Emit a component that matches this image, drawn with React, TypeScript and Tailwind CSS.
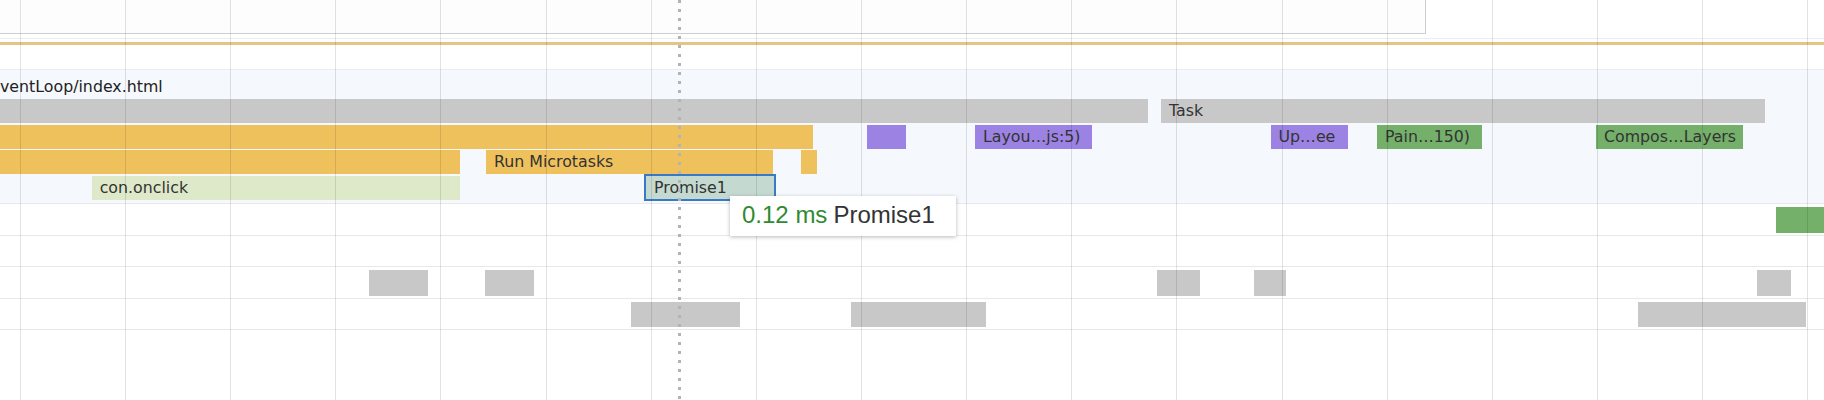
import React from "react";

type Bar = { x: number; w: number; cls: string; label?: string; selected?: boolean };

const GRAY = "bg-[#c8c8c8]";
const ORANGE = "bg-[#efc15d]";
const PURPLE = "bg-[#9c83e3]";
const GREEN = "bg-[#74b06a]";

// vertical time grid
const gridLines = Array.from({ length: 18 }, (_, i) => Math.round(19.8 + i * 105.15));

const flameRows: Bar[][] = [
  [
    { x: 0, w: 1148, cls: GRAY },
    { x: 1161, w: 604, cls: GRAY, label: "Task" },
  ],
  [
    { x: 0, w: 812.5, cls: ORANGE },
    { x: 867, w: 39, cls: PURPLE },
    { x: 975, w: 117, cls: PURPLE, label: "Layou…js:5)" },
    { x: 1270.5, w: 77.5, cls: PURPLE, label: "Up…ee" },
    { x: 1377, w: 104.5, cls: GREEN, label: "Pain…150)" },
    { x: 1596, w: 146.5, cls: GREEN, label: "Compos…Layers" },
  ],
  [
    { x: 0, w: 460, cls: ORANGE },
    { x: 486, w: 287, cls: ORANGE, label: "Run Microtasks" },
    { x: 801, w: 7, cls: ORANGE },
  ],
  [
    { x: 91.7, w: 368.3, cls: "bg-[#dde9c9]", label: "con.onclick" },
    { x: 644, w: 132, cls: "bg-[#c4dad0]", label: "Promise1", selected: true },
  ],
];

const tracks: Bar[][] = [
  [{ x: 1776, w: 60, cls: GREEN }],
  [],
  [
    { x: 369, w: 58.5, cls: GRAY },
    { x: 484.5, w: 49.5, cls: GRAY },
    { x: 1156.5, w: 43.5, cls: GRAY },
    { x: 1254, w: 31.5, cls: GRAY },
    { x: 1756.5, w: 34.5, cls: GRAY },
  ],
  [
    { x: 631, w: 108.5, cls: GRAY },
    { x: 850.5, w: 135, cls: GRAY },
    { x: 1638, w: 168, cls: GRAY },
  ],
];

function FlameBar({ bar }: { bar: Bar }) {
  if (bar.selected) {
    return (
      <div
        className={`absolute -top-[1.5px] h-[27px] border-2 border-[#3a79c8] px-2 overflow-hidden whitespace-nowrap leading-[23px] text-[#333] ${bar.cls}`}
        style={{ left: bar.x, width: bar.w }}
      >
        {bar.label}
      </div>
    );
  }
  return (
    <div
      className={`absolute top-0 h-full px-2 overflow-hidden whitespace-nowrap leading-[24px] text-[#333] ${bar.cls}`}
      style={{ left: bar.x, width: bar.w }}
    >
      {bar.label}
    </div>
  );
}

export default function App() {
  return (
    <div className="relative w-[1824px] h-[400px] overflow-hidden bg-white font-['DejaVu_Sans',sans-serif] text-[15.8px]">
      {/* overview strip */}
      <div className="h-[69px]">
        <div className="w-[1426px] h-[34px] border-r border-b border-[#cdcdd4] bg-[#fdfdfd]" />
        <div className="mt-[4px] h-px bg-[#ececef]" />
        <div className="mt-[3px] h-[3px] bg-[#e3c685]" />
      </div>

      {/* main thread flame chart */}
      <div className="h-[134px] border-t border-[#ebebef] bg-[#f5f8fd]">
        <div className="h-[29px] pt-[8px] leading-[18px] text-[#222] whitespace-nowrap">ventLoop/index.html</div>
        <div className="flex flex-col gap-[1.5px]">
          {flameRows.map((row, i) => (
            <div key={i} className="relative h-[24px]">
              {row.map((bar, j) => (
                <FlameBar key={j} bar={bar} />
              ))}
            </div>
          ))}
        </div>
      </div>

      {/* lower tracks */}
      {tracks.map((row, i) => (
        <div
          key={i}
          className={`relative border-t border-[#e8e8e8] ${i === tracks.length - 1 ? "h-[32.5px] border-b" : "h-[31.5px]"}`}
        >
          {row.map((b, j) => (
            <div key={j} className={`absolute top-[3px] h-[25.5px] ${b.cls}`} style={{ left: b.x, width: b.w }} />
          ))}
        </div>
      ))}

      {/* grid overlay */}
      <div className="pointer-events-none absolute inset-0">
        {gridLines.map((x) => (
          <div key={x} className="absolute top-0 h-full w-px bg-[rgba(0,0,0,0.11)]" style={{ left: x }} />
        ))}
      </div>

      {/* cursor */}
      <div className="pointer-events-none absolute top-0 left-[678px] h-full w-[3px] bg-[repeating-linear-gradient(to_bottom,#b3b3b3_0px,#b3b3b3_3px,transparent_3px,transparent_9px)]" />

      {/* hover tooltip */}
      <div className="absolute left-[730px] top-[196px] flex h-[40px] w-[226px] items-center bg-white pl-[12px] pb-[3px] font-['Liberation_Sans',Arial,sans-serif] text-[24px] whitespace-nowrap shadow-[0_1px_4px_rgba(0,0,0,0.28)]">
        <span className="text-[#2f8a33]">0.12 ms</span>
        <span className="ml-[6px] text-[#333]">Promise1</span>
      </div>
    </div>
  );
}
